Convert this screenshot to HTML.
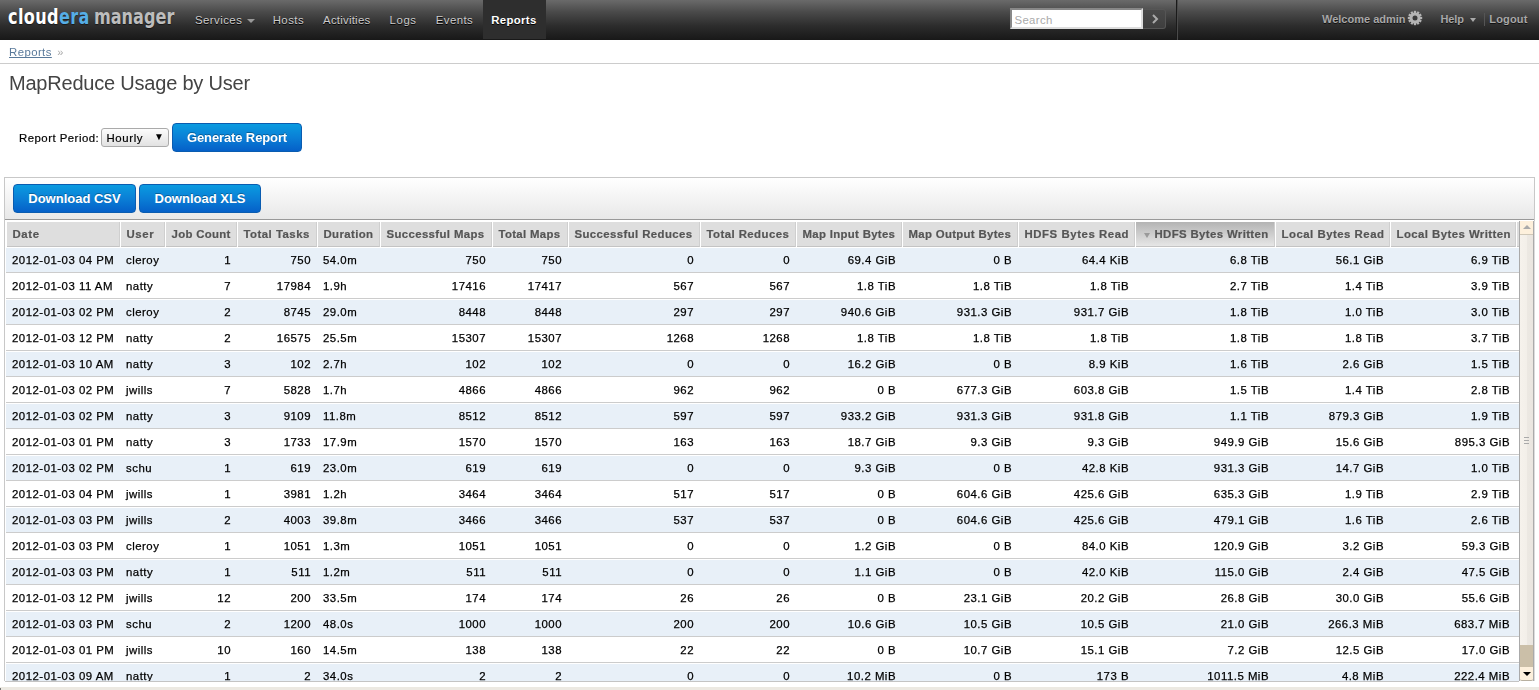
<!DOCTYPE html>
<html>
<head>
<meta charset="utf-8">
<title>MapReduce Usage by User - Cloudera Manager</title>
<style>
*{box-sizing:border-box;}
html,body{margin:0;padding:0;}
body{width:1539px;height:690px;overflow:hidden;background:#fff;font-family:"Liberation Sans",Arial,Helvetica,sans-serif;font-size:12px;color:#000;position:relative;transform:translateZ(0);}
a{text-decoration:none;}
/* ---------- top navigation ---------- */
#nav{position:absolute;left:0;top:0;width:1539px;height:40px;background:linear-gradient(to bottom,#6a6a6a 0%,#4a4a4a 30%,#2c2c2c 65%,#181818 100%);}
#logo{position:absolute;left:8px;top:2px;letter-spacing:.55px;height:30px;line-height:30px;font-family:"DejaVu Sans","Liberation Sans",sans-serif;font-weight:bold;font-size:22px;color:#fff;white-space:nowrap;transform-origin:0 50%;transform:scale(.73,1);text-shadow:0 1px 1px rgba(0,0,0,.5);}
#logo .era{color:#56aee6;}
#logo .mgr{color:#bdbdbd;margin-left:5.5px;letter-spacing:.1px;}
#nav ul{list-style:none;margin:0;padding:0;}
#menu{position:absolute;left:187px;top:0;height:40px;white-space:nowrap;}
#menu li{display:inline-block;vertical-align:top;height:40px;line-height:40px;padding:0 8px;margin-right:3px;font-size:11.4px;letter-spacing:.45px;color:#ccc;text-shadow:0 1px 0 #000;}
#menu li.active{background:#2e2e2e;color:#fff;font-weight:bold;height:39px;letter-spacing:.33px;position:relative;top:0;line-height:40px;left:-1px;padding-right:9.5px;}
.caret{display:inline-block;width:0;height:0;border-left:4px solid transparent;border-right:4px solid transparent;border-top:4px solid #999;vertical-align:middle;margin-left:5px;}
#search{position:absolute;left:1010px;top:8px;width:133px;height:21px;background:#fff;border:2px solid #888;border-right-color:#ddd;border-bottom-color:#ddd;font-size:11.4px;letter-spacing:.33px;line-height:20px;color:#aaa;padding-left:2.5px;overflow:hidden;}
#go{position:absolute;left:1143px;top:9px;width:23px;height:20px;background:linear-gradient(#4a4a4a,#3e3e3e);border:1px solid #555;border-left:0;border-radius:0 3px 3px 0;}
#go svg{position:absolute;left:8px;top:4px;}
#sep{position:absolute;left:1176px;top:0;width:1px;height:40px;background:#1a1a1a;border-right:1px solid #4a4a4a;width:2px;}
#right{position:absolute;left:0;top:0;width:1539px;height:40px;font-size:11px;font-weight:bold;color:#a8a8a8;line-height:14px;text-shadow:0 1px 0 #111;}
#right span{position:absolute;white-space:nowrap;top:12px;}
#right .vsep{position:absolute;left:1484px;top:13px;width:1px;height:13px;background:#555;}
#gear{position:absolute;left:1407px;top:10px;}
/* ---------- breadcrumb / title ---------- */
#crumb{position:absolute;left:9px;top:44px;font-size:11.4px;line-height:16px;color:#aaa;white-space:nowrap;}
#crumb a{color:#5a7a9b;text-decoration:underline;text-decoration-skip-ink:none;text-underline-offset:1px;text-decoration-thickness:1px;letter-spacing:.42px;}
#crumb span{font-size:11px;margin-left:5.5px;}
#crumbline{position:absolute;left:0;top:63px;width:1539px;height:1px;background:#ccc;}
h1{position:absolute;left:9px;top:71px;margin:0;font-size:20px;line-height:24px;font-weight:normal;color:#444;white-space:nowrap;letter-spacing:-.21px;}
/* ---------- form ---------- */
#lbl{-webkit-text-stroke:.2px #000;position:absolute;left:19px;top:130px;font-size:11.4px;line-height:16px;white-space:nowrap;letter-spacing:.48px;}
#sel{-webkit-text-stroke:.2px #000;position:absolute;left:101px;top:128px;width:68px;height:19px;border:1px solid #aaa;border-radius:3px;background:linear-gradient(#fcfcfc,#e2e2e2);font-size:11.4px;line-height:18px;padding-left:4.5px;letter-spacing:.62px;}
#sel i{position:absolute;right:4px;letter-spacing:0;top:.5px;font-style:normal;font-size:10px;line-height:14px;-webkit-text-stroke:0;}
.btn{position:absolute;height:29px;line-height:27px;border:1px solid #0a5cb0;border-radius:4px;background:linear-gradient(to bottom,#0a9be0 0%,#0a7fd6 50%,#0560c8 100%);color:#fff;font-weight:bold;font-size:13px;text-align:center;text-shadow:0 -1px 0 rgba(0,0,0,.3);white-space:nowrap;}
/* ---------- panel ---------- */
#panel{position:absolute;left:4px;top:177px;width:1531px;height:504px;border:1px solid #c8c8c8;border-bottom:0;border-right:0;}
#panelr{position:absolute;left:1534px;top:177px;width:1px;height:44px;background:#c8c8c8;}
#panelr2{position:absolute;left:1534px;top:221px;width:1px;height:460px;background:#dcdcdc;}
#toolbar{position:absolute;left:0;top:0;width:1529px;height:42px;background:linear-gradient(#fff,#e8e8e8);border-bottom:1px solid #999;}
#tablewrap{position:absolute;left:6px;top:221px;width:1513px;height:460px;overflow:hidden;}
table.dt{border-collapse:separate;border-spacing:0;table-layout:fixed;width:1513px;font-size:12px;}
table.dt th{height:26px;padding:0;border:0;text-align:left;font-weight:bold;color:#555;white-space:nowrap;overflow:hidden;background:#fff;}
table.dt th div{-webkit-text-stroke:.2px #555;height:25px;margin:1px 0 0 1px;background:#dedede;border-right:1px solid #cfcfcf;border-bottom:1px solid #c4c4c4;line-height:25px;padding-left:5.5px;font-size:11.4px;}
table.dt th.sorted div{background:linear-gradient(#b4b4b4,#e6e6e6);}
.sortarrow{display:inline-block;width:0;height:0;border-left:3.5px solid transparent;border-right:3.5px solid transparent;border-top:5px solid #9a9a9a;margin:0 5px 0 2px;vertical-align:middle;position:relative;top:.5px;}
table.dt td{-webkit-text-stroke:.25px #000;height:26px;padding:0 6px 0 6px;font-size:11.4px;letter-spacing:.5px;border-top:1px solid #fff;border-bottom:1px solid #ccc;line-height:24px;white-space:nowrap;overflow:hidden;}
table.dt td.r{text-align:right;}
table.dt td.x{padding:0;}
table.dt th:last-child div{padding:0;border-right:0;}
table.dt tr.odd td{background:#e8f0f8;}
table.dt tr.even td{background:#fff;}
/* ---------- scrollbar ---------- */
#sb{position:absolute;left:1519px;top:221px;width:15px;height:460px;background:linear-gradient(to right,#f6f2ec 0,#f3efe9 50%,#ece8e2 55%,#eae6e0 100%);border-left:1px solid #aaa;border-right:1px solid #aaa;}
#sb .up{position:absolute;left:0;top:0;width:13px;height:14px;background:#fdf0dc;border-bottom:1px solid #d0c8b8;}
#sb .up i{position:absolute;left:3px;top:4px;width:0;height:0;border-left:4px solid transparent;border-right:4px solid transparent;border-bottom:4px solid #aaa;}
#sb .tr{position:absolute;left:0;top:424px;width:13px;height:22px;background:#cbbfa8;}
#sb .dn{position:absolute;left:0;top:446px;width:13px;height:14px;background:#fdf0dc;border-bottom:1px solid #b8b0a0;border-radius:0 0 2px 2px;}
#sb .dn i{position:absolute;left:3px;top:4.5px;width:0;height:0;border-left:4px solid transparent;border-right:4px solid transparent;border-top:4px solid #000;}
#sb .grip{position:absolute;left:4px;top:216px;width:5px;height:7px;border-top:1px solid #aaa;border-bottom:1px solid #aaa;}
#sb .grip:after{content:"";position:absolute;left:0;top:2px;width:5px;height:1px;background:#aaa;}
#panelbottom{position:absolute;left:5px;top:681px;width:1514px;height:1px;background:#c4c4c4;}
#hbar{position:absolute;left:0;top:687px;width:1539px;height:3px;background:#ece9e2;}
#hbar i{position:absolute;left:0;top:1px;width:1px;height:2px;background:#777;}
</style>
</head>
<body>
<div id="nav">
  <div id="logo">cloud<span class="era">era</span><span class="mgr">manager</span></div>
  <ul id="menu"><li style="padding-right:7px">Services<span class="caret"></span></li><li style="margin-left:-.6px">Hosts</li><li style="letter-spacing:.24px">Activities</li><li style="letter-spacing:.65px">Logs</li><li>Events</li><li class="active">Reports</li></ul>
  <div id="search">Search</div>
  <div id="go"><svg width="9" height="10" viewBox="0 0 9 10"><path d="M2 1 L6 5 L2 9" fill="none" stroke="#aaa" stroke-width="2"/></svg></div>
  <div id="sep"></div>
  <div id="right">
    <span style="left:1322px">Welcome admin</span>
    <svg id="gear" width="16" height="16" viewBox="-8 -8 16 16"><g fill="#b4b4b4"><circle r="5.5"/><rect x="-1.15" y="-7.2" width="2.3" height="14.4" transform="rotate(0)"/><rect x="-1.15" y="-7.2" width="2.3" height="14.4" transform="rotate(30)"/><rect x="-1.15" y="-7.2" width="2.3" height="14.4" transform="rotate(60)"/><rect x="-1.15" y="-7.2" width="2.3" height="14.4" transform="rotate(90)"/><rect x="-1.15" y="-7.2" width="2.3" height="14.4" transform="rotate(120)"/><rect x="-1.15" y="-7.2" width="2.3" height="14.4" transform="rotate(150)"/></g><circle r="2.5" fill="#3a3a3a"/></svg>
    <span style="left:1440.5px;letter-spacing:-.1px">Help</span><i class="caret" style="position:absolute;left:1470px;top:18px;margin:0;border-top-color:#aaa;border-left-width:3.5px;border-right-width:3.5px;"></i>
    <b class="vsep"></b>
    <span style="left:1489.3px;letter-spacing:.15px">Logout</span>
  </div>
</div>
<div id="crumb"><a>Reports</a><span>&raquo;</span></div>
<div id="crumbline"></div>
<h1>MapReduce Usage by User</h1>
<div id="lbl">Report Period:</div>
<div id="sel">Hourly<i>&#9660;</i></div>
<div class="btn" style="left:172px;top:123px;width:130px;letter-spacing:-.12px;">Generate Report</div>
<div id="panel"><div id="toolbar"></div></div>
<div class="btn" style="left:13px;top:184px;width:123px;">Download CSV</div>
<div class="btn" style="left:139px;top:184px;width:122px;">Download XLS</div>
<div id="tablewrap"><table class="dt"><colgroup><col style="width:114px"><col style="width:45px"><col style="width:72px"><col style="width:80px"><col style="width:63px"><col style="width:112px"><col style="width:76px"><col style="width:132px"><col style="width:96px"><col style="width:106px"><col style="width:116px"><col style="width:117px"><col style="width:140px"><col style="width:115px"><col style="width:126px"><col style="width:3px"></colgroup><thead><tr><th><div style="letter-spacing:0.62px">Date</div></th><th><div style="letter-spacing:0.62px">User</div></th><th><div style="letter-spacing:0.32px">Job Count</div></th><th><div style="letter-spacing:0.48px">Total Tasks</div></th><th><div style="letter-spacing:0.38px">Duration</div></th><th><div style="letter-spacing:0.37px">Successful Maps</div></th><th><div style="letter-spacing:0.32px">Total Maps</div></th><th><div style="letter-spacing:0.40px">Successful Reduces</div></th><th><div style="letter-spacing:0.44px">Total Reduces</div></th><th><div style="letter-spacing:0.32px">Map Input Bytes</div></th><th><div style="letter-spacing:0.32px">Map Output Bytes</div></th><th><div style="letter-spacing:0.56px">HDFS Bytes Read</div></th><th class="sorted"><div style="letter-spacing:0.37px"><i class="sortarrow"></i>HDFS Bytes Written</div></th><th><div style="letter-spacing:0.50px">Local Bytes Read</div></th><th><div style="letter-spacing:0.44px">Local Bytes Written</div></th><th><div></div></th></tr></thead><tbody><tr class="odd"><td>2012-01-03 04 PM</td><td>cleroy</td><td class="r">1</td><td class="r">750</td><td>54.0m</td><td class="r">750</td><td class="r">750</td><td class="r">0</td><td class="r">0</td><td class="r">69.4 GiB</td><td class="r">0 B</td><td class="r">64.4 KiB</td><td class="r">6.8 TiB</td><td class="r">56.1 GiB</td><td class="r">6.9 TiB</td><td class="x"></td></tr><tr class="even"><td>2012-01-03 11 AM</td><td>natty</td><td class="r">7</td><td class="r">17984</td><td>1.9h</td><td class="r">17416</td><td class="r">17417</td><td class="r">567</td><td class="r">567</td><td class="r">1.8 TiB</td><td class="r">1.8 TiB</td><td class="r">1.8 TiB</td><td class="r">2.7 TiB</td><td class="r">1.4 TiB</td><td class="r">3.9 TiB</td><td class="x"></td></tr><tr class="odd"><td>2012-01-03 02 PM</td><td>cleroy</td><td class="r">2</td><td class="r">8745</td><td>29.0m</td><td class="r">8448</td><td class="r">8448</td><td class="r">297</td><td class="r">297</td><td class="r">940.6 GiB</td><td class="r">931.3 GiB</td><td class="r">931.7 GiB</td><td class="r">1.8 TiB</td><td class="r">1.0 TiB</td><td class="r">3.0 TiB</td><td class="x"></td></tr><tr class="even"><td>2012-01-03 12 PM</td><td>natty</td><td class="r">2</td><td class="r">16575</td><td>25.5m</td><td class="r">15307</td><td class="r">15307</td><td class="r">1268</td><td class="r">1268</td><td class="r">1.8 TiB</td><td class="r">1.8 TiB</td><td class="r">1.8 TiB</td><td class="r">1.8 TiB</td><td class="r">1.8 TiB</td><td class="r">3.7 TiB</td><td class="x"></td></tr><tr class="odd"><td>2012-01-03 10 AM</td><td>natty</td><td class="r">3</td><td class="r">102</td><td>2.7h</td><td class="r">102</td><td class="r">102</td><td class="r">0</td><td class="r">0</td><td class="r">16.2 GiB</td><td class="r">0 B</td><td class="r">8.9 KiB</td><td class="r">1.6 TiB</td><td class="r">2.6 GiB</td><td class="r">1.5 TiB</td><td class="x"></td></tr><tr class="even"><td>2012-01-03 02 PM</td><td>jwills</td><td class="r">7</td><td class="r">5828</td><td>1.7h</td><td class="r">4866</td><td class="r">4866</td><td class="r">962</td><td class="r">962</td><td class="r">0 B</td><td class="r">677.3 GiB</td><td class="r">603.8 GiB</td><td class="r">1.5 TiB</td><td class="r">1.4 TiB</td><td class="r">2.8 TiB</td><td class="x"></td></tr><tr class="odd"><td>2012-01-03 02 PM</td><td>natty</td><td class="r">3</td><td class="r">9109</td><td>11.8m</td><td class="r">8512</td><td class="r">8512</td><td class="r">597</td><td class="r">597</td><td class="r">933.2 GiB</td><td class="r">931.3 GiB</td><td class="r">931.8 GiB</td><td class="r">1.1 TiB</td><td class="r">879.3 GiB</td><td class="r">1.9 TiB</td><td class="x"></td></tr><tr class="even"><td>2012-01-03 01 PM</td><td>natty</td><td class="r">3</td><td class="r">1733</td><td>17.9m</td><td class="r">1570</td><td class="r">1570</td><td class="r">163</td><td class="r">163</td><td class="r">18.7 GiB</td><td class="r">9.3 GiB</td><td class="r">9.3 GiB</td><td class="r">949.9 GiB</td><td class="r">15.6 GiB</td><td class="r">895.3 GiB</td><td class="x"></td></tr><tr class="odd"><td>2012-01-03 02 PM</td><td>schu</td><td class="r">1</td><td class="r">619</td><td>23.0m</td><td class="r">619</td><td class="r">619</td><td class="r">0</td><td class="r">0</td><td class="r">9.3 GiB</td><td class="r">0 B</td><td class="r">42.8 KiB</td><td class="r">931.3 GiB</td><td class="r">14.7 GiB</td><td class="r">1.0 TiB</td><td class="x"></td></tr><tr class="even"><td>2012-01-03 04 PM</td><td>jwills</td><td class="r">1</td><td class="r">3981</td><td>1.2h</td><td class="r">3464</td><td class="r">3464</td><td class="r">517</td><td class="r">517</td><td class="r">0 B</td><td class="r">604.6 GiB</td><td class="r">425.6 GiB</td><td class="r">635.3 GiB</td><td class="r">1.9 TiB</td><td class="r">2.9 TiB</td><td class="x"></td></tr><tr class="odd"><td>2012-01-03 03 PM</td><td>jwills</td><td class="r">2</td><td class="r">4003</td><td>39.8m</td><td class="r">3466</td><td class="r">3466</td><td class="r">537</td><td class="r">537</td><td class="r">0 B</td><td class="r">604.6 GiB</td><td class="r">425.6 GiB</td><td class="r">479.1 GiB</td><td class="r">1.6 TiB</td><td class="r">2.6 TiB</td><td class="x"></td></tr><tr class="even"><td>2012-01-03 03 PM</td><td>cleroy</td><td class="r">1</td><td class="r">1051</td><td>1.3m</td><td class="r">1051</td><td class="r">1051</td><td class="r">0</td><td class="r">0</td><td class="r">1.2 GiB</td><td class="r">0 B</td><td class="r">84.0 KiB</td><td class="r">120.9 GiB</td><td class="r">3.2 GiB</td><td class="r">59.3 GiB</td><td class="x"></td></tr><tr class="odd"><td>2012-01-03 03 PM</td><td>natty</td><td class="r">1</td><td class="r">511</td><td>1.2m</td><td class="r">511</td><td class="r">511</td><td class="r">0</td><td class="r">0</td><td class="r">1.1 GiB</td><td class="r">0 B</td><td class="r">42.0 KiB</td><td class="r">115.0 GiB</td><td class="r">2.4 GiB</td><td class="r">47.5 GiB</td><td class="x"></td></tr><tr class="even"><td>2012-01-03 12 PM</td><td>jwills</td><td class="r">12</td><td class="r">200</td><td>33.5m</td><td class="r">174</td><td class="r">174</td><td class="r">26</td><td class="r">26</td><td class="r">0 B</td><td class="r">23.1 GiB</td><td class="r">20.2 GiB</td><td class="r">26.8 GiB</td><td class="r">30.0 GiB</td><td class="r">55.6 GiB</td><td class="x"></td></tr><tr class="odd"><td>2012-01-03 03 PM</td><td>schu</td><td class="r">2</td><td class="r">1200</td><td>48.0s</td><td class="r">1000</td><td class="r">1000</td><td class="r">200</td><td class="r">200</td><td class="r">10.6 GiB</td><td class="r">10.5 GiB</td><td class="r">10.5 GiB</td><td class="r">21.0 GiB</td><td class="r">266.3 MiB</td><td class="r">683.7 MiB</td><td class="x"></td></tr><tr class="even"><td>2012-01-03 01 PM</td><td>jwills</td><td class="r">10</td><td class="r">160</td><td>14.5m</td><td class="r">138</td><td class="r">138</td><td class="r">22</td><td class="r">22</td><td class="r">0 B</td><td class="r">10.7 GiB</td><td class="r">15.1 GiB</td><td class="r">7.2 GiB</td><td class="r">12.5 GiB</td><td class="r">17.0 GiB</td><td class="x"></td></tr><tr class="odd"><td>2012-01-03 09 AM</td><td>natty</td><td class="r">1</td><td class="r">2</td><td>34.0s</td><td class="r">2</td><td class="r">2</td><td class="r">0</td><td class="r">0</td><td class="r">10.2 MiB</td><td class="r">0 B</td><td class="r">173 B</td><td class="r">1011.5 MiB</td><td class="r">4.8 MiB</td><td class="r">222.4 MiB</td><td class="x"></td></tr></tbody></table></div>
<div id="sb"><div class="up"><i></i></div><div class="grip"></div><div class="tr"></div><div class="dn"><i></i></div></div>
<div id="panelr"></div><div id="panelr2"></div><div id="panelbottom"></div>
<div id="hbar"><i></i></div>
</body>
</html>
